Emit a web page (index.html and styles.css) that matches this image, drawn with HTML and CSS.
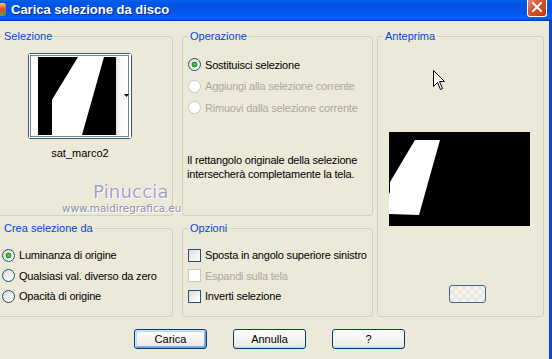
FILE: index.html
```html
<!DOCTYPE html>
<html lang="it">
<head>
    <meta charset="UTF-8">
    <meta name="viewport" content="width=device-width, initial-scale=1.0">
    <title>Carica selezione da disco</title>
    <link rel="stylesheet" href="styles.css">
</head>
<body>
    <div class="window">
        <div class="titlebar">
            <span class="app-icon"></span>
            <span class="title">Carica selezione da disco</span>
            <span class="close-btn">
                <svg width="18" height="16" viewBox="0 0 18 16">
                    <path d="M5 3 L13 11 M13 3 L5 11" stroke="#fff" stroke-width="2" stroke-linecap="square"/>
                </svg>
            </span>
        </div>

        <div class="client">
            <div class="groups">
                <fieldset class="group sel">
                    <legend>Selezione</legend>
                    <div class="thumb-wrap">
                        <button type="button" class="thumb">
                            <svg width="102" height="84" viewBox="0 0 102 84">
                                <defs>
                                    <linearGradient id="strip" x1="0" x2="1">
                                        <stop offset="0" stop-color="#e4e4e4"/>
                                        <stop offset="0.4" stop-color="#fafafa"/>
                                        <stop offset="1" stop-color="#ffffff"/>
                                    </linearGradient>
                                </defs>
                                <rect x="0" y="0" width="102" height="84" fill="#fff"/>
                                <rect x="87" y="3" width="12" height="78" fill="url(#strip)"/>
                                <rect x="9" y="3" width="78" height="78" fill="#000"/>
                                <polygon points="49,3 75,3 53,81 23,81 23,46 24,44" fill="#fff"/>
                                <polygon points="95,40 100,40 97.5,43" fill="#000"/>
                                <rect x="1.5" y="1.5" width="98" height="81" fill="none" stroke="#000" stroke-width="1" stroke-dasharray="1 1"/>
                            </svg>
                        </button>
                        <div class="thumb-name">sat_marco2</div>
                    </div>
                </fieldset>

                <fieldset class="group op">
                    <legend>Operazione</legend>
                    <div class="options">
                        <label class="opt"><input type="radio" name="op" checked> Sostituisci selezione</label>
                        <label class="opt off"><input type="radio" name="op" disabled> Aggiungi alla selezione corrente</label>
                        <label class="opt off"><input type="radio" name="op" disabled> Rimuovi dalla selezione corrente</label>
                    </div>
                    <p class="note">Il rettangolo originale della selezione<br>intersecherà completamente la tela.</p>
                </fieldset>

                <fieldset class="group preview">
                    <legend>Anteprima</legend>
                    <svg class="preview-img" width="141" height="94" viewBox="0 0 141 94">
                        <rect width="141" height="94" fill="#000"/>
                        <polygon points="26,8 51,8 30,83 0,82 0,62 1,60 1,50" fill="#fff"/>
                    </svg>
                    <button type="button" class="mini-btn"></button>
                    <svg class="cursor" width="13" height="21" viewBox="0 0 13 21">
                        <path d="M0.5 0.5 L0.5 16.5 L4.5 12.5 L7.5 19.5 L9.5 18.5 L6.5 11.5 L11.5 11.5 Z" fill="#fff" stroke="#000" stroke-width="1"/>
                    </svg>
                </fieldset>

                <fieldset class="group crea">
                    <legend>Crea selezione da</legend>
                    <div class="options">
                        <label class="opt"><input type="radio" name="src" checked> Luminanza di origine</label>
                        <label class="opt"><input type="radio" name="src"> Qualsiasi val. diverso da zero</label>
                        <label class="opt"><input type="radio" name="src"> Opacità di origine</label>
                    </div>
                </fieldset>

                <fieldset class="group opz">
                    <legend>Opzioni</legend>
                    <div class="options">
                        <label class="opt"><input type="checkbox"> Sposta in angolo superiore sinistro</label>
                        <label class="opt off"><input type="checkbox" disabled> Espandi sulla tela</label>
                        <label class="opt"><input type="checkbox"> Inverti selezione</label>
                    </div>
                </fieldset>
            </div>

            <div class="actions">
                <button type="button" class="btn default">Carica</button>
                <button type="button" class="btn">Annulla</button>
                <button type="button" class="btn">?</button>
            </div>

            <div class="watermark">
                <span class="wm-name">Pinuccia</span>
                <span class="wm-site">www.maidiregrafica.eu</span>
            </div>
        </div>
    </div>
</body>
</html>
```

FILE: styles.css
```css
* {
    box-sizing: border-box;
}

body {
    margin: 0;
    background: #ece9d8;
    font-family: "Liberation Sans", Arial, sans-serif;
    font-size: 11px;
    color: #000;
    overflow: hidden;
}

.window {
    width: 552px;
    height: 359px;
}

/* title bar, top of it is cut off in the capture */
.titlebar {
    height: 21px;
    display: flex;
    align-items: center;
    background: linear-gradient(to bottom, #0262ee 0%, #0057e5 12%, #0054e3 22%, #0055eb 60%, #005bf5 75%, #0062ef 88%, #0048c4 96%, #003da8 100%);
}

.app-icon {
    width: 6px;
    height: 13px;
    margin-top: -2px;
    border-radius: 0 3px 3px 0;
    background: linear-gradient(to bottom, #f4d05a 0%, #e2502f 45%, #5e9d3c 100%);
}

.title {
    margin-left: 5px;
    margin-top: -3px;
    color: #fff;
    font-weight: bold;
    font-size: 13px;
    letter-spacing: 0;
    text-shadow: 1px 1px 0 #0a2a8a;
}

.close-btn {
    margin-left: auto;
    margin-right: 5px;
    align-self: flex-start;
    width: 20px;
    height: 17px;
    display: flex;
    align-items: center;
    justify-content: center;
    border: 1px solid #fff;
    border-top: none;
    border-radius: 0 0 3px 3px;
    background: linear-gradient(135deg, #e98a6c 0%, #d9542c 40%, #c4380d 100%);
}

.client {
    position: relative;
    height: 338px;
    padding-top: 9px;
    border-right: 3px solid #0a45d8;
}

.groups {
    display: grid;
    grid-template-columns: 182px 191px 167px;
    grid-template-rows: 186px 95px;
    column-gap: 4px;
    row-gap: 6px;
    margin-left: -4px;
}

.group {
    margin: 0;
    padding: 0 5px;
    min-width: 0;
    border: 1px solid #d0d0bf;
    border-radius: 3px;
}

.group legend {
    padding: 0 2px;
    line-height: 13px;
    color: #0046d5;
}

.sel {
    grid-column: 1;
    grid-row: 1;
    width: 177px;
}

.op {
    grid-column: 2;
    grid-row: 1;
}

.preview {
    grid-column: 3;
    grid-row: 1 / 3;
    position: relative;
}

.crea {
    grid-column: 1;
    grid-row: 2;
    width: 177px;
}

.opz {
    grid-column: 2;
    grid-row: 2;
}

/* selection thumbnail */
.thumb-wrap {
    width: 104px;
    margin: 10px 0 0 26px;
}

.thumb {
    display: block;
    width: 104px;
    height: 86px;
    padding: 0;
    border: 1px solid #2c5a8c;
    border-radius: 3px;
    background: #fff;
}

.thumb svg {
    display: block;
}

.thumb-name {
    margin-top: 8px;
    line-height: 13px;
    text-align: center;
}

/* radio / checkbox rows */
.options {
    padding-top: 11px;
}

.opt {
    display: flex;
    align-items: center;
    gap: 4px;
    height: 21.5px;
    letter-spacing: -0.2px;
}

.crea .options,
.opz .options {
    padding-top: 10px;
}

.crea .opt,
.opz .opt {
    height: 20.5px;
}

.opt.off {
    color: #aca899;
}

.opt input {
    appearance: none;
    -webkit-appearance: none;
    flex: 0 0 auto;
    width: 13px;
    height: 13px;
    margin: 0;
    border: 1px solid #1c5180;
    background: linear-gradient(135deg, #dcd9cd 0%, #f4f3ee 60%, #ffffff 100%);
}

.opt input[type="radio"] {
    border-radius: 50%;
}

.opt input[type="radio"]:checked {
    background: radial-gradient(circle, #6fd66f 0, #21a121 2px, #21a121 2.6px, transparent 3.2px),
                linear-gradient(135deg, #dcd9cd 0%, #f4f3ee 60%, #ffffff 100%);
}

.opt input:disabled {
    border-color: #cac8bb;
    background: #fff;
}

.note {
    margin: 34px 0 0 -1px;
    line-height: 14px;
    letter-spacing: -0.2px;
}

/* preview */
.preview-img {
    display: block;
    margin: 89px 0 0 6px;
}

.mini-btn {
    display: block;
    width: 37px;
    height: 18px;
    margin: 59px 0 0 66px;
    padding: 0;
    border: 1px solid #3f6690;
    border-radius: 3px;
    background-color: #f4f3ee;
    background-image: linear-gradient(45deg, #e8e7e0 25%, transparent 25%, transparent 75%, #e8e7e0 75%),
                      linear-gradient(45deg, #e8e7e0 25%, transparent 25%, transparent 75%, #e8e7e0 75%);
    background-size: 8px 8px;
    background-position: 0 0, 4px 4px;
}

.cursor {
    position: absolute;
    left: 55px;
    top: 27px;
}

/* bottom buttons */
.actions {
    display: flex;
    gap: 26px;
    padding-left: 134px;
    margin-top: 12px;
}

.btn {
    width: 73px;
    height: 20px;
    padding: 0;
    border: 1px solid #003c74;
    border-radius: 3px;
    background: linear-gradient(to bottom, #ffffff 0%, #f5f4ef 50%, #ecebe5 85%, #d8d3c8 100%);
    font-family: "Liberation Sans", Arial, sans-serif;
    font-size: 11px;
    color: #000;
}

.btn.default {
    box-shadow: inset 1px 1px 0 #cee7ff, inset -1px -1px 0 #6c9ff0, inset 2px 2px 0 #bcd4f6, inset -2px -2px 0 #89ade4;
}

/* watermark over the dialog */
.watermark {
    position: absolute;
    left: 0;
    top: 160px;
    width: 190px;
    pointer-events: none;
}

.wm-name {
    display: block;
    margin-left: 93px;
    font-family: "DejaVu Sans", sans-serif;
    font-size: 18px;
    line-height: 21px;
    letter-spacing: 0.2px;
    color: #a3a3c4;
    text-shadow: 1px 1px 0 #fff, -1px 0 0 #f2f2f8;
}

.wm-site {
    display: block;
    margin-left: 62px;
    font-family: "DejaVu Sans", sans-serif;
    font-size: 10.4px;
    line-height: 12px;
    color: #8e8eae;
    text-shadow: 1px 1px 0 #fff;
}
```
